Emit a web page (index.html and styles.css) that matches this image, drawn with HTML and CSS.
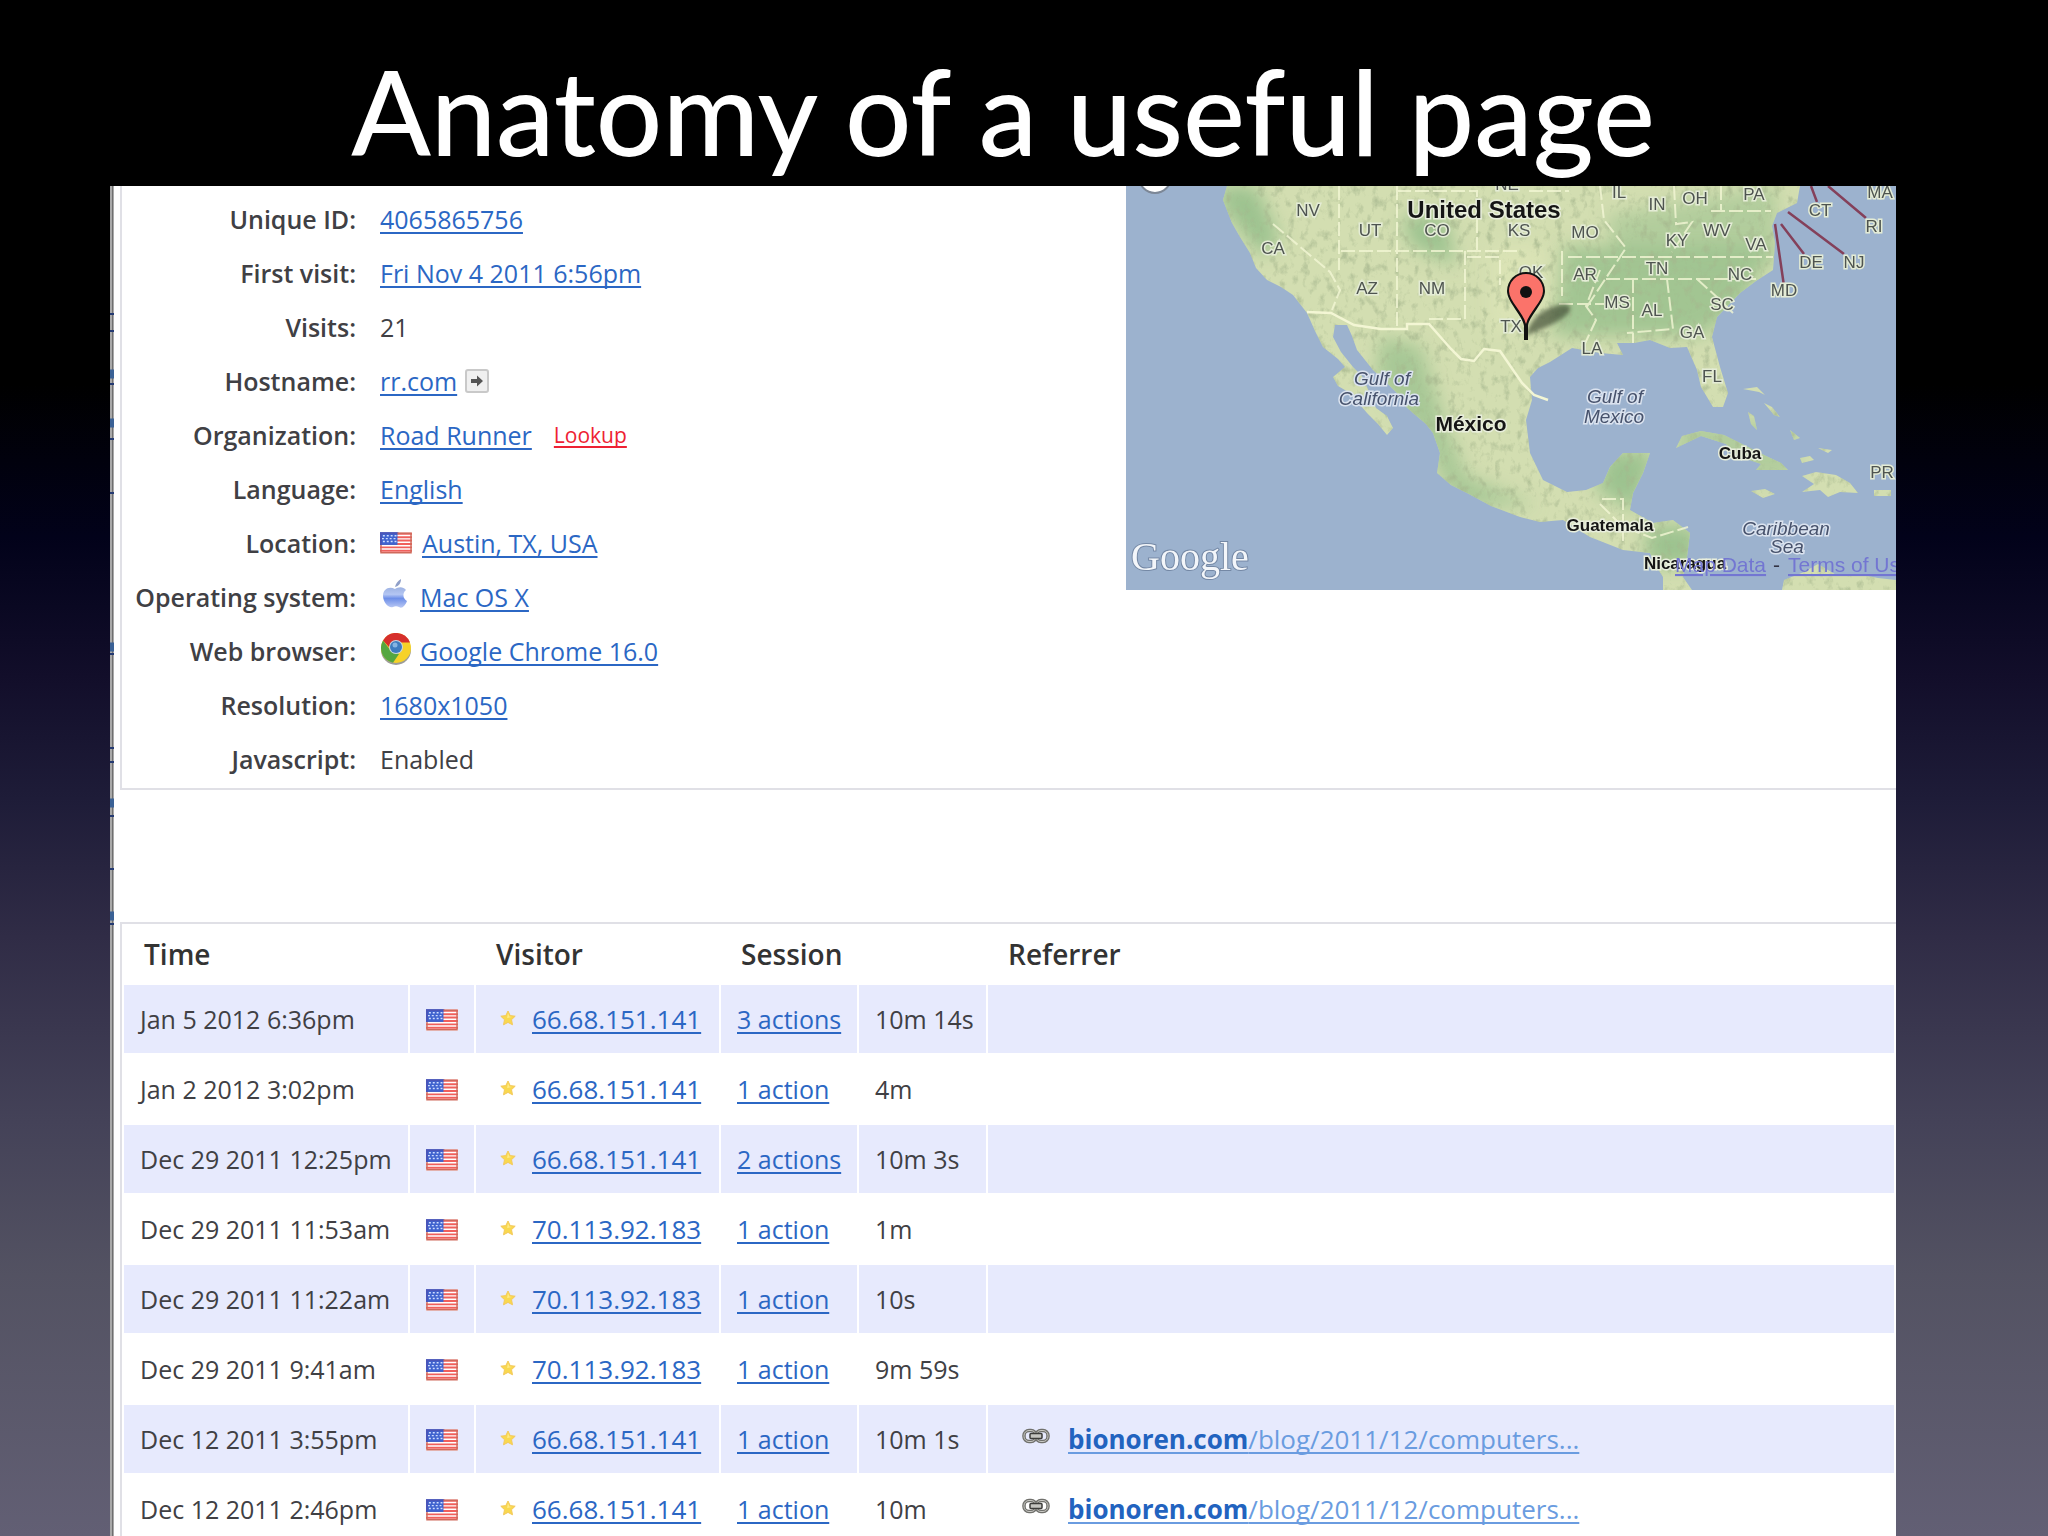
FILE: index.html
```html
<!DOCTYPE html>
<html lang="en">
<head>
<meta charset="utf-8">
<title>Anatomy of a useful page</title>
<link rel="stylesheet" href="styles.css">
</head>
<body>
<svg class="sprite" aria-hidden="true">
  <symbol id="flag" viewBox="0 0 33 22">
    <rect width="33" height="22" fill="#fff"/>
    <path d="M0 1.5h33M0 5h33M0 8.500h33M0 12h33M0 15.500h33M0 19h33" stroke="#f0605c" stroke-width="2"/>
    <rect width="18" height="13" fill="#3f63cf"/>
    <path d="M3 3.500h14M2 6.500h14M3 9.500h14" stroke="#cfdcff" stroke-width="1.500" stroke-dasharray="2 2"/>
    <path d="M1 13V1h18" fill="none" stroke="#4a55b8" stroke-width="2"/>
    <path d="M18 1h14v20H1v-8" fill="none" stroke="#cf6a5c" stroke-width="1.500"/>
  </symbol>
  <symbol id="star" viewBox="0 0 16 16">
    <path d="M8 1l2.200 4.600 5 .6-3.700 3.500 1 5.100L8 12.400l-4.500 2.400 1-5.100L.8 6.200l5-.6z" fill="#f9d84e" stroke="#f3c95c" stroke-width="1"/>
    <path d="M8 3l1.300 3.500 3 .5-5.300 1z" fill="#fdea8a"/>
  </symbol>
  <symbol id="chain" viewBox="0 0 28 16">
    <g fill="none" stroke="#70706c" stroke-width="3.500">
      <rect x="2" y="2.500" width="12" height="11" rx="5"/>
      <rect x="14" y="2.500" width="12" height="11" rx="5"/>
    </g>
    <g fill="none" stroke="#c9c9c4" stroke-width="1">
      <rect x="2" y="2.500" width="12" height="11" rx="5"/>
      <rect x="14" y="2.500" width="12" height="11" rx="5"/>
    </g>
    <rect x="8" y="5.500" width="12" height="5" rx="1" fill="#c4c4c0" stroke="#3c3c3a" stroke-width="1.500"/>
  </symbol>
</svg>

<main class="slide">
  <h1 class="slide-title">Anatomy of a useful page</h1>
  <div class="shot">
    <svg class="edge" viewBox="0 0 4 1350" preserveAspectRatio="xMinYMin slice" aria-hidden="true">
      <rect width="4" height="1350" fill="#a9a9a9"/>
      <rect x="2" width="1" height="1350" fill="#6f6f6f"/>
      <path d="M0 128h4M0 145h4M0 198h4M0 253h4M0 307h4M0 468h4M0 562h4M0 576h4M0 630h4M0 683h4M0 738h4" stroke="#243a72" stroke-width="2"/>
      <path d="M0 188h4M0 237h4M0 461h4M0 617h4M0 730h4" stroke="#3a6195" stroke-width="9"/>
    </svg>
    <div class="content">
      <section class="panel profile">
        <dl class="details">
          <dt>Unique ID:</dt><dd><a href="#">4065865756</a></dd>
          <dt>First visit:</dt><dd><a href="#">Fri Nov 4 2011 6:56pm</a></dd>
          <dt>Visits:</dt><dd>21</dd>
          <dt>Hostname:</dt><dd><a href="#">rr.com</a>
            <button class="go" type="button" aria-label="Go to host"><svg width="14" height="14" viewBox="0 0 14 14"><path d="M1 5h6V1.500L13 7l-6 5.500V9H1z" fill="#555"/></svg></button></dd>
          <dt>Organization:</dt><dd><a href="#">Road Runner</a><a class="lookup" href="#">Lookup</a></dd>
          <dt>Language:</dt><dd><a href="#">English</a></dd>
          <dt>Location:</dt><dd><svg class="flag"><use href="#flag"/></svg><a href="#">Austin, TX, USA</a></dd>
          <dt>Operating system:</dt><dd><svg class="badge" viewBox="0 0 32 32">
            <defs><linearGradient id="ap" x2="0" y2="1"><stop offset="0" stop-color="#9db2e2"/><stop offset=".35" stop-color="#b4c6f3"/><stop offset=".55" stop-color="#6e8fe8"/><stop offset="1" stop-color="#b9c8f4"/></linearGradient></defs>
            <path d="M15 8c1-4 3-6 6-8 0 4-2 7-6 8z" fill="#8f9fc8"/>
            <path d="M15 10c3-2 8-3 11 1-4 3-3 9 1 11-2 5-5 8-8 6-2-1-4-1-6 0-4 2-10-5-10-11 0-7 6-10 12-7z" fill="url(#ap)"/></svg><a href="#">Mac OS X</a></dd>
          <dt>Web browser:</dt><dd><svg class="badge" viewBox="0 0 32 32">
            <circle cx="16" cy="17" r="15" fill="#9c9c98"/>
            <circle cx="16" cy="15" r="15" fill="#f6d228"/>
            <path d="M3 7.500A15 15 0 0 1 30 9.500H16L9 14z" fill="#d62f2c"/>
            <path d="M3 7.500A15 15 0 0 0 13 29.700L19 21l-8-3z" fill="#54a641"/>
            <circle cx="16" cy="14" r="7" fill="#c9d6e2"/>
            <circle cx="16" cy="14" r="6" fill="#3d7cc0"/>
            <circle cx="15" cy="12" r="2.500" fill="#86b5e2"/></svg><a href="#">Google Chrome 16.0</a></dd>
          <dt>Resolution:</dt><dd><a href="#">1680x1050</a></dd>
          <dt>Javascript:</dt><dd>Enabled</dd>
        </dl>
        <svg class="map" viewBox="0 0 770 404" role="img" aria-label="Map with a pin on Texas">
          <defs>
            <filter id="relief" x="0" y="0" width="100%" height="100%">
              <feTurbulence type="fractalNoise" baseFrequency="0.130 0.090" numOctaves="4" seed="8"/>
              <feColorMatrix values="0 0 0 0 .38  0 0 0 0 .47  0 0 0 0 .27  3 0 0 0 -1.550"/>
            </filter>
            <filter id="soft" x="-30%" y="-30%" width="160%" height="160%"><feGaussianBlur stdDeviation="9"/></filter>
            <filter id="shade" x="-30%" y="-30%" width="160%" height="160%"><feGaussianBlur stdDeviation="2"/></filter>
            <clipPath id="land">
              <path d="M101 0L97 14 106 37 114 51 124 67 130 82 141 94 155 101 167 109 181 127 189 145 197 161 212 173 219 181 207 191 212 200 224 207 241 227 252 238 261 249 267 242 261 230 250 222 241 201 236 190 227 181 215 166 207 151 209 139 221 139 226 150 231 164 247 184 260 196 271 207 278 219 287 227 300 238 307 247 314 267 311 287 325 299 341 307 365 320 394 331 414 336 437 334 464 351 497 364 524 367 530 380 537 391 537 404H566L557 391 561 371 564 347 547 334 527 337 504 324 507 307 517 287 524 267 497 267 484 281 477 297 460 304 441 306 417 294 404 267 400 234 406 214 404 191 412 182 424 176 446 162 474 167 497 169 491 157 508 157 524 154 544 162 561 161 571 184 575 201 587 221 597 221 602 207 594 181 586 151 591 131 614 107 630 95 647 84 649 57 646 40 651 27 671 17 674 0z"/>
              <path d="M550 262L556 250 575 245 598 249 620 260 640 270 655 277 662 284 630 284 635 278 612 270 600 258 575 250z"/>
              <path d="M676 290l14-4 20 3 14 8 8 10-18-1-12 5-8-7-18 2 12-8zM625 305l14-2 10 5-12 4zM748 304h17v6h-17zM656 404l2-10 20-8 14-8 20 12 20-2 20 4 18 2v10z"/>
              <path d="M622 226l6 4 3 14-6-6zM617 203l14-2 8 8-6-3zM638 217l8 4 8 10-6-2zM664 244l10 8-6 2zM674 272l10-2 4 4-12 3zM692 262l14 2-4 3z"/>
            </clipPath>
          </defs>
          <rect width="770" height="404" fill="#9cb2ce"/>
          <g clip-path="url(#land)">
            <rect width="770" height="404" fill="#d3deb1"/>
            <g filter="url(#soft)" fill="#9cc28f">
              <path d="M90 0h40l25 55-20 15L95 20z"/>
              <path d="M275 30h45l10 50-45-20z"/>
              <path d="M436 60h210l-30 60-40 30H426l10-70z" opacity=".9"/>
              <path d="M480 30l170-30v80l-160-10z" opacity=".6"/>
              <path d="M255 150l40 10 25 80 20 50 70 30-80 0-30-60-50-70z" opacity=".8"/>
              <path d="M480 265h50l-20 60-40-20z"/><path d="M520 340h50v40h-50z"/>
              <path d="M550 235h120v60H550z" opacity=".6"/>
            </g>
            <path d="M365 60h55v70l-55 20z" fill="#dae3b5" filter="url(#soft)"/>
            <rect width="770" height="404" filter="url(#relief)" opacity=".7"/>
          </g>
          <g fill="none" stroke="#f3f6d4" stroke-width="2">
            <path d="M181 126l24 1 23 12 27 4h26v-5h22l22 25 10 10 13 2 10-12 16 2 22 32 12 12 14 5" stroke-width="2.500"/>
            <path d="M147 38l57 48 10 18-8 20M213 0v84M215 65h180M271 0v140M271 5h80v60M339 65v68h-38M341 71h33v28M403 5h40M436 65v45M442 71h205M474 84l-14 36 10 14-14 30M480 93h150M507 93v64M541 93l6 50-46 4M433 118h45M571 93l22 20 14 14M585 25h60M548 0l2 38 16-2-20 30M595 0v25M474 0l4 34 22 28-40 60M476 313h21v42M474 318l22 22 30 12 36-11" stroke-dasharray="14 4" opacity=".8"/>
          </g>
          <g stroke="#84405a" stroke-width="2.500"><path d="M662 26l56 42M655 38l23 30M649 38l9 62M685 0l6 16M702 0l38 32M742 0l4 3"/></g>
          <g class="states">
            <text x="182" y="30">NV</text><text x="244" y="50">UT</text><text x="311" y="50">CO</text><text x="147" y="68">CA</text><text x="241" y="108">AZ</text><text x="306" y="108">NM</text><text x="393" y="50">KS</text><text x="459" y="52">MO</text><text x="405" y="92">OK</text><text x="459" y="94">AR</text><text x="385" y="146">TX</text><text x="381" y="4">NE</text><text x="493" y="12">IL</text><text x="531" y="24">IN</text><text x="569" y="18">OH</text><text x="628" y="14">PA</text><text x="551" y="60">KY</text><text x="591" y="50">WV</text><text x="630" y="64">VA</text><text x="531" y="88">TN</text><text x="614" y="94">NC</text><text x="491" y="122">MS</text><text x="526" y="130">AL</text><text x="596" y="124">SC</text><text x="566" y="152">GA</text><text x="466" y="168">LA</text><text x="586" y="196">FL</text><text x="694" y="30">CT</text><text x="754" y="12">MA</text><text x="748" y="46">RI</text><text x="685" y="82">DE</text><text x="728" y="82">NJ</text><text x="658" y="110">MD</text><text x="756" y="292">PR</text>
          </g>
          <g class="seas">
            <text x="256" y="199">Gulf of</text><text x="253" y="219">California</text><text x="489" y="217">Gulf of</text><text x="488" y="237">Mexico</text><text x="660" y="349">Caribbean</text><text x="661" y="367">Sea</text>
          </g>
          <g class="countries">
            <text class="big" x="358" y="32">United States</text><text class="mid" x="345" y="245">México</text><text x="614" y="273">Cuba</text><text x="484" y="345">Guatemala</text><text x="559" y="383">Nicaragua</text>
          </g>
          <path d="M400 150c2-12 12-24 24-28 12-6 22-4 20 2-4 10-26 18-44 26z" fill="#39452f" opacity=".65" filter="url(#shade)"/>
          <path d="M398 154V140c-1-10-17-24-17-35a19 19 0 0 1 38 0c0 11-16 25-17 35v14z" fill="#111"/>
          <path d="M400 138c-3-12-17-23-17-33a17 17 0 0 1 34 0c0 10-14 21-17 33z" fill="#fb736a"/>
          <circle cx="400" cy="106" r="6" fill="#111"/>
          <circle cx="29" cy="-9" r="16" fill="#fff" stroke="#7c8796" stroke-width="2"/>
          <text class="brand" x="5" y="384">Google</text>
          <a href="#"><text class="legal" x="549" y="386">Map Data</text></a><text class="legal dash" x="647" y="386">-</text><a href="#"><text class="legal" x="662" y="386">Terms of Use</text></a>
        </svg>
      </section>

      <section class="panel visits">
        <table class="log">
          <colgroup><col class="c-time"><col class="c-flag"><col class="c-ip"><col class="c-act"><col class="c-dur"><col></colgroup>
          <thead><tr><th>Time</th><th></th><th>Visitor</th><th>Session</th><th></th><th>Referrer</th></tr></thead>
          <tbody>
            <tr><td>Jan 5 2012 6:36pm</td><td class="country"><svg class="flag"><use href="#flag"/></svg></td><td class="ip"><svg class="star"><use href="#star"/></svg><a href="#">66.68.151.141</a></td><td><a href="#">3 actions</a></td><td>10m 14s</td><td></td></tr>
            <tr><td>Jan 2 2012 3:02pm</td><td class="country"><svg class="flag"><use href="#flag"/></svg></td><td class="ip"><svg class="star"><use href="#star"/></svg><a href="#">66.68.151.141</a></td><td><a href="#">1 action</a></td><td>4m</td><td></td></tr>
            <tr><td>Dec 29 2011 12:25pm</td><td class="country"><svg class="flag"><use href="#flag"/></svg></td><td class="ip"><svg class="star"><use href="#star"/></svg><a href="#">66.68.151.141</a></td><td><a href="#">2 actions</a></td><td>10m 3s</td><td></td></tr>
            <tr><td>Dec 29 2011 11:53am</td><td class="country"><svg class="flag"><use href="#flag"/></svg></td><td class="ip"><svg class="star"><use href="#star"/></svg><a href="#">70.113.92.183</a></td><td><a href="#">1 action</a></td><td>1m</td><td></td></tr>
            <tr><td>Dec 29 2011 11:22am</td><td class="country"><svg class="flag"><use href="#flag"/></svg></td><td class="ip"><svg class="star"><use href="#star"/></svg><a href="#">70.113.92.183</a></td><td><a href="#">1 action</a></td><td>10s</td><td></td></tr>
            <tr><td>Dec 29 2011 9:41am</td><td class="country"><svg class="flag"><use href="#flag"/></svg></td><td class="ip"><svg class="star"><use href="#star"/></svg><a href="#">70.113.92.183</a></td><td><a href="#">1 action</a></td><td>9m 59s</td><td></td></tr>
            <tr><td>Dec 12 2011 3:55pm</td><td class="country"><svg class="flag"><use href="#flag"/></svg></td><td class="ip"><svg class="star"><use href="#star"/></svg><a href="#">66.68.151.141</a></td><td><a href="#">1 action</a></td><td>10m 1s</td><td class="ref"><svg class="chain"><use href="#chain"/></svg><a href="#"><b>bionoren.com</b>/blog/2011/12/computers...</a></td></tr>
            <tr><td>Dec 12 2011 2:46pm</td><td class="country"><svg class="flag"><use href="#flag"/></svg></td><td class="ip"><svg class="star"><use href="#star"/></svg><a href="#">66.68.151.141</a></td><td><a href="#">1 action</a></td><td>10m</td><td class="ref"><svg class="chain"><use href="#chain"/></svg><a href="#"><b>bionoren.com</b>/blog/2011/12/computers...</a></td></tr>
          </tbody>
        </table>
      </section>
    </div>
  </div>
</main>
</body>
</html>
```
FILE: styles.css
```css
* { box-sizing: border-box; }

body {
  margin: 0;
  background: #000;
  color: #404044;
  font: 25px/54px "Trebuchet MS", "Open Sans", "Noto Sans", sans-serif;
}

.sprite { display: none; }

a {
  color: #2b67c4;
  text-decoration-thickness: 2px;
  text-underline-offset: 3px;
  text-decoration-skip-ink: none;
}

.slide {
  height: 100vh;
  overflow: hidden;
  display: flex;
  flex-direction: column;
  padding: 0 152px 0 110px;
  background: linear-gradient(#000 0%, #000 25%, #02021a 35%, #120e2a 44%, #1e1c38 52%, #302c46 61%, #444258 73%, #535262 83%, #625f74 100%);
}

.slide-title {
  margin: 0;
  padding-top: 36px;
  color: #fff;
  font: 500 117px/150px "Gill Sans", Lato, sans-serif;
  text-align: center;
  white-space: nowrap;
}

/* captured page shown on the slide */
.shot {
  position: relative;
  flex: 1;
  min-height: 0;
  display: flex;
  background: #fff;
}
.edge { flex: none; width: 4px; height: 1350px; }
.content { flex: 1; min-width: 0; padding-left: 6px; }

.panel {
  border: 2px solid #e0e0e6;
  border-right: 0;
}

.profile {
  display: flex;
  justify-content: space-between;
  align-items: flex-start;
  margin-bottom: 132px;
  border-top: 0;
}

.details {
  display: grid;
  grid-template-columns: 234px auto;
  column-gap: 24px;
  margin: 0;
  padding: 6px 0 2px;
  white-space: nowrap;
}
.details dt { font-weight: 600; text-align: right; }
.details dd { display: flex; align-items: center; height: 54px; margin: 0; }

.go {
  display: flex;
  align-items: center;
  justify-content: center;
  width: 24px;
  height: 24px;
  margin-left: 8px;
  padding: 0;
  border: 2px solid #c9c9c9;
  border-radius: 3px;
  background: #f0f0f0;
}
.lookup { margin-left: 22px; color: #ee2233; font-size: 21px; }

.flag { width: 32px; height: 22px; }
.details .flag { margin-right: 10px; }
.badge { width: 32px; height: 32px; margin: 0 8px 4px 0; }

.map { flex: none; width: 770px; height: 404px; }
.map text {
  font-family: Arial, "Liberation Sans", sans-serif;
  paint-order: stroke;
  text-anchor: middle;
}
.states text { font-size: 17px; fill: #4e5450; stroke: #e4ecd6; stroke-width: 3px; }
.seas text { font-size: 19px; font-style: italic; fill: #47526c; stroke: #dbe3ef; stroke-width: 3px; }
.countries text { font-size: 17px; font-weight: 700; fill: #151515; stroke: #e8eedc; stroke-width: 3px; }
.countries .mid { font-size: 21px; }
.countries .big { font-size: 24px; }
.map .brand {
  font: 40px "Liberation Serif", serif;
  fill: #f3f6fa;
  stroke: #7488a5;
  stroke-width: 2px;
  text-anchor: start;
}
.map .legal { font-size: 21px; fill: #7376d2; text-anchor: start; text-decoration: underline; }
.map .dash { fill: #334; text-decoration: none; }

.visits { overflow: hidden; }
.log {
  width: 100%;
  table-layout: fixed;
  border-spacing: 2px;
  white-space: nowrap;
}
.c-time { width: 284px; }
.c-flag { width: 64px; }
.c-ip { width: 243px; }
.c-act { width: 136px; }
.c-dur { width: 127px; }
.log th {
  height: 57px;
  padding: 0 0 0 20px;
  color: #333;
  font-size: 28px;
  font-weight: 600;
  line-height: 57px;
  text-align: left;
}
.log td { height: 68px; padding: 0 0 0 16px; }
.log tbody tr:nth-child(odd) td { background: #e7eafd; }
.log svg { vertical-align: middle; }
.log .flag { margin-bottom: 4px; }
.log .ip { padding-left: 24px; font-size: 26px; }
.star { width: 16px; height: 16px; margin: 0 16px 8px 0; }
.log .ref { padding-left: 34px; font-size: 26px; }
.chain { width: 28px; height: 16px; margin: 0 18px 12px 0; }
.ref a { color: #6a9ce0; }
.ref b { color: #2263bf; font-weight: 700; }
```
